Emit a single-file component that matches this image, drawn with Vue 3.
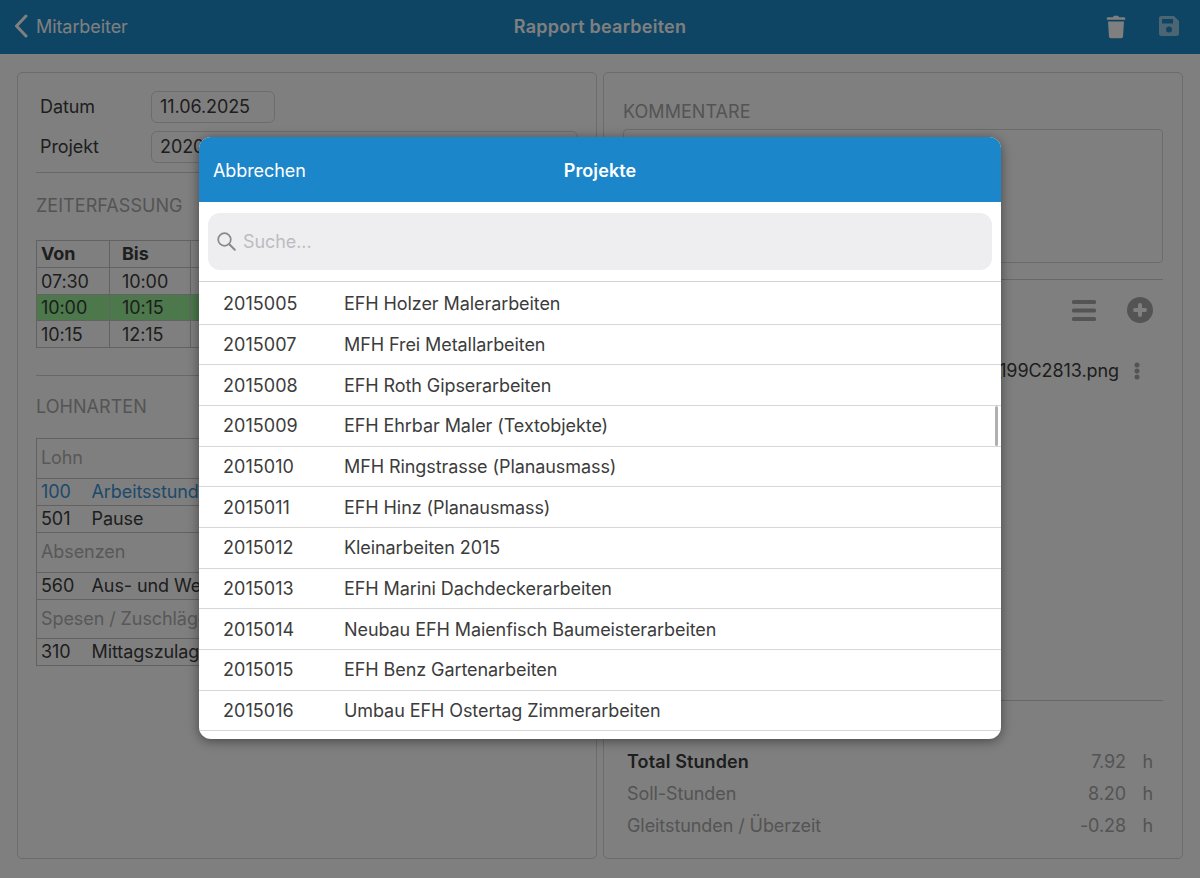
<script setup>
const projects = [
  ['2015005', 'EFH Holzer Malerarbeiten'],
  ['2015007', 'MFH Frei Metallarbeiten'],
  ['2015008', 'EFH Roth Gipserarbeiten'],
  ['2015009', 'EFH Ehrbar Maler (Textobjekte)'],
  ['2015010', 'MFH Ringstrasse (Planausmass)'],
  ['2015011', 'EFH Hinz (Planausmass)'],
  ['2015012', 'Kleinarbeiten 2015'],
  ['2015013', 'EFH Marini Dachdeckerarbeiten'],
  ['2015014', 'Neubau EFH Maienfisch Baumeisterarbeiten'],
  ['2015015', 'EFH Benz Gartenarbeiten'],
  ['2015016', 'Umbau EFH Ostertag Zimmerarbeiten'],
]
const times = [
  ['07:30', '10:00', ''],
  ['10:00', '10:15', 'green'],
  ['10:15', '12:15', ''],
]
</script>

<template>
  <div class="page">
    <header class="topbar">
      <div class="back">
        <svg class="chev" width="14" height="24" viewBox="0 0 14 24"><path d="M12 2 2.5 12 12 22" fill="none" stroke="#fff" stroke-width="3" stroke-linecap="round" stroke-linejoin="round"/></svg>
        <span>Mitarbeiter</span>
      </div>
      <div class="title">Rapport bearbeiten</div>
      <div class="actions">
        <svg width="20" height="24" viewBox="0 0 20 24"><path d="M7 2.2C7.3 1.2 8 .8 9 .8h2c1 0 1.700.4 2 1.400h5c.8 0 1.200.5 1.200 1.200V4.800H.8V3.400c0-.7.4-1.200 1.200-1.200Z" fill="#fff"/><path d="M2 6.400h16l-1 15.200c-.1 1-.8 1.600-1.800 1.600H4.800c-1 0-1.700-.6-1.800-1.600Z" fill="#fff"/></svg>
        <svg class="save" width="20" height="20" viewBox="0 0 20 20"><path fill-rule="evenodd" d="M2.500 0H15l5 5v12.500A2.500 2.500 0 0 1 17.500 20h-15A2.500 2.500 0 0 1 0 17.500v-15A2.500 2.500 0 0 1 2.500 0ZM3 3v4.500h11V3ZM10 10.500a3 3 0 1 0 0 6 3 3 0 0 0 0-6Z" fill="#fff"/></svg>
      </div>
    </header>

    <main class="content">
      <section class="panel left">
        <div class="field-row"><label>Datum</label><div class="input date">11.06.2025</div></div>
        <div class="field-row"><label>Projekt</label><div class="input wide">2020001</div></div>
        <hr class="rule first" />
        <h2 class="section zeit">ZEITERFASSUNG</h2>
        <table class="grid times">
          <colgroup><col class="c1" /><col class="c2" /><col /></colgroup>
          <tbody>
            <tr class="head"><th>Von</th><th>Bis</th><th></th></tr>
            <tr v-for="(t, i) in times" :key="i" :class="t[2]"><td>{{ t[0] }}</td><td>{{ t[1] }}</td><td></td></tr>
          </tbody>
        </table>
        <hr class="rule second" />
        <h2 class="section lohn">LOHNARTEN</h2>
        <table class="grid wages">
          <colgroup><col class="code-col" /><col /></colgroup>
          <tbody>
            <tr class="group"><td colspan="2">Lohn</td></tr>
            <tr class="active"><td>100</td><td>Arbeitsstunden</td></tr>
            <tr><td>501</td><td>Pause</td></tr>
            <tr class="group"><td colspan="2">Absenzen</td></tr>
            <tr><td>560</td><td>Aus- und Weiterbildung</td></tr>
            <tr class="group"><td colspan="2">Spesen / Zuschläge</td></tr>
            <tr><td>310</td><td>Mittagszulage</td></tr>
          </tbody>
        </table>
      </section>

      <section class="panel right">
        <h2 class="section komm">KOMMENTARE</h2>
        <div class="textarea"></div>
        <hr class="rule r1" />
        <div class="tools">
          <svg width="24" height="21" viewBox="0 0 24 21"><rect y="0" width="24" height="4" rx="1.500" fill="#a8a8a8"/><rect y="8.500" width="24" height="4" rx="1.500" fill="#a8a8a8"/><rect y="17" width="24" height="4" rx="1.500" fill="#a8a8a8"/></svg>
          <svg width="26" height="26" viewBox="0 0 26 26"><circle cx="13" cy="13" r="13" fill="#a8a8a8"/><path d="M13 8v10M8 13h10" stroke="#fff" stroke-width="4" stroke-linecap="round"/></svg>
        </div>
        <div class="file">
          <span>IMG_199C2813.png</span>
          <svg width="6" height="18" viewBox="0 0 6 18"><circle cx="3" cy="3" r="2.500" fill="#a8a8a8"/><circle cx="3" cy="9" r="2.500" fill="#a8a8a8"/><circle cx="3" cy="15" r="2.500" fill="#a8a8a8"/></svg>
        </div>
        <div class="spacer"></div>
        <hr class="rule r2" />
        <div class="totals">
          <div class="total strong"><span class="tl">Total Stunden</span><span class="tv">7.92</span><span class="tu">h</span></div>
          <div class="total"><span class="tl">Soll-Stunden</span><span class="tv">8.20</span><span class="tu">h</span></div>
          <div class="total"><span class="tl">Gleitstunden / Überzeit</span><span class="tv">-0.28</span><span class="tu">h</span></div>
        </div>
      </section>
    </main>

    <div class="overlay">
      <div class="modal">
        <div class="modal-head">
          <span class="cancel">Abbrechen</span>
          <span class="modal-title">Projekte</span>
        </div>
        <div class="search-wrap">
          <div class="search">
            <svg width="19" height="19" viewBox="0 0 19 19"><circle cx="7.500" cy="7.500" r="6.300" fill="none" stroke="#8a8a8e" stroke-width="1.700"/><path d="m12.300 12.300 5.500 5.500" stroke="#8a8a8e" stroke-width="2" stroke-linecap="round"/></svg>
            <span>Suche...</span>
          </div>
        </div>
        <div class="list">
          <div v-for="p in projects" :key="p[0]" class="row">
            <span class="num">{{ p[0] }}</span>
            <span class="name">{{ p[1] }}</span>
          </div>
          <div class="scrollbar"></div>
        </div>
      </div>
    </div>
  </div>
</template>

<style>
html, body { margin: 0; background: #fff; }
</style>

<style scoped>
.page { width: 1200px; height: 878px; display: flex; flex-direction: column; overflow: hidden; font-family: Inter, "Noto Sans", sans-serif; font-size: 18px; letter-spacing: -.08px; color: #3c3c3c; position: relative; box-sizing: border-box; }
.topbar { height: 54px; background: #1c8aca; display: flex; align-items: center; padding: 0 21px 2px 14px; box-sizing: border-box; position: relative; color: #fff; flex: none; }
.back { display: flex; align-items: center; gap: 8px; flex: 1; }
.title { font-weight: 600; letter-spacing: .25px; margin-left: 7px; }
.actions { flex: 1; display: flex; justify-content: flex-end; align-items: center; gap: 33px; margin-top: 2px; }
.save { opacity: .55; margin-bottom: 2px; }
.content { flex: 1; display: flex; gap: 6px; padding: 18px 17px 19px; min-height: 0; }
.panel { border: 1px solid #d8d8d8; border-radius: 5px; padding: 18px 18px 0; box-sizing: border-box; display: flex; flex-direction: column; min-width: 0; }
.left { flex: none; width: 580px; }
.field-row { display: flex; align-items: center; height: 32px; margin-bottom: 8px; padding-left: 4px; }
.field-row label { width: 111px; line-height: 30px; padding-bottom: 1px; }
.input { height: 32px; box-sizing: border-box; border: 1px solid #d8d8d8; border-radius: 6px; padding: 0 8px; line-height: 29px; }
.date { width: 124px; }
.wide { flex: 1; }
.rule { border: 0; border-top: 1px solid #d0d0d0; margin: 0; flex: none; }
.rule.first { margin-top: 1px; }
.section { font-size: 18px; font-weight: 400; color: #a8a8a8; margin: 0; letter-spacing: .05px; }
.zeit { margin-top: 22px; line-height: 22px; }
.grid { border-collapse: collapse; width: 100%; table-layout: fixed; }
.grid td, .grid th { border: 1px solid #c4c4c4; padding: 0 4px; text-align: left; height: 25.750px; line-height: 22px; white-space: nowrap; overflow: hidden; }
.times { margin-top: 23px; }
.c1 { width: 73px; }
.c2 { width: 81px; }
.grid.times td { padding-top: 2px; height: 23.750px; }
.times td:nth-child(2), .times th:nth-child(2) { padding-left: 12px; }
.times th { font-weight: 700; }
.green td { background: #98f098; }
.rule.second { margin-top: 27px; }
.lohn { margin-top: 20px; line-height: 22px; }
.wages { margin-top: 20px; }
.grid.wages td { height: 26px; }
.grid.wages td:first-child:not(:only-child) { border-right: 0; }
.grid.wages td:last-child:not(:only-child) { border-left: 0; }
.code-col { width: 51px; }
.grid.wages .group td { color: #b0b0b0; height: 38.750px; }
.active td { color: #3a94d6; }
.right { flex: 1; padding: 28px 19px 0; }
.komm { line-height: 22px; }
.textarea { height: 134px; box-sizing: border-box; border: 1px solid #d8d8d8; border-radius: 4px; margin-top: 6px; flex: none; }
.rule.r1 { margin-top: 16px; }
.tools { display: flex; justify-content: flex-end; align-items: center; gap: 31px; margin-top: 17px; padding-right: 10px; }
.file { display: flex; justify-content: flex-end; align-items: center; gap: 15px; margin-top: 37px; padding-right: 23px; }
.spacer { flex: 1; }
.totals { padding: 44px 10px 17px 4px; }
.total { display: flex; height: 32px; align-items: center; color: #a8a8a8; }
.total.strong { color: #3c3c3c; }
.total.strong .tl { font-weight: 600; letter-spacing: .12px; }
.strong .tv, .strong .tu { color: #a8a8a8; }
.tl { flex: 1; }
.tu { width: 27px; text-align: right; }
.overlay { position: absolute; inset: 0; background: rgba(0, 0, 0, .5); display: flex; align-items: center; justify-content: center; }
.modal { width: 802px; height: 602px; background: #fff; border-radius: 12px; overflow: hidden; box-shadow: 0 2px 12px rgba(0, 0, 0, .45); display: flex; flex-direction: column; margin-bottom: 2px; }
.modal-head { height: 65px; background: #1c86ca; color: #fff; display: flex; align-items: center; justify-content: center; position: relative; flex: none; padding-top: 1px; box-sizing: border-box; }
.cancel { position: absolute; left: 14px; }
.modal-title { font-weight: 600; letter-spacing: .1px; }
.search-wrap { padding: 11px 9px; flex: none; }
.search { height: 57px; background: #eeeef0; border-radius: 12px; display: flex; align-items: center; padding: 0 9px; gap: 7px; color: #bcbcc0; }
.list { border-top: 1px solid #d4d4d4; position: relative; flex: 1; min-height: 0; overflow: hidden; }
.row { height: 40.670px; box-sizing: border-box; display: flex; align-items: center; padding-left: 24px; border-bottom: 1px solid #d8d8d8; }
.row:first-child { height: 42.600px; padding-top: 2px; }
.num { width: 121px; letter-spacing: .05px; }
.scrollbar { position: absolute; right: 3px; top: 124px; width: 3px; height: 40px; background: #b0b0b0; border-radius: 2px; }
</style>
